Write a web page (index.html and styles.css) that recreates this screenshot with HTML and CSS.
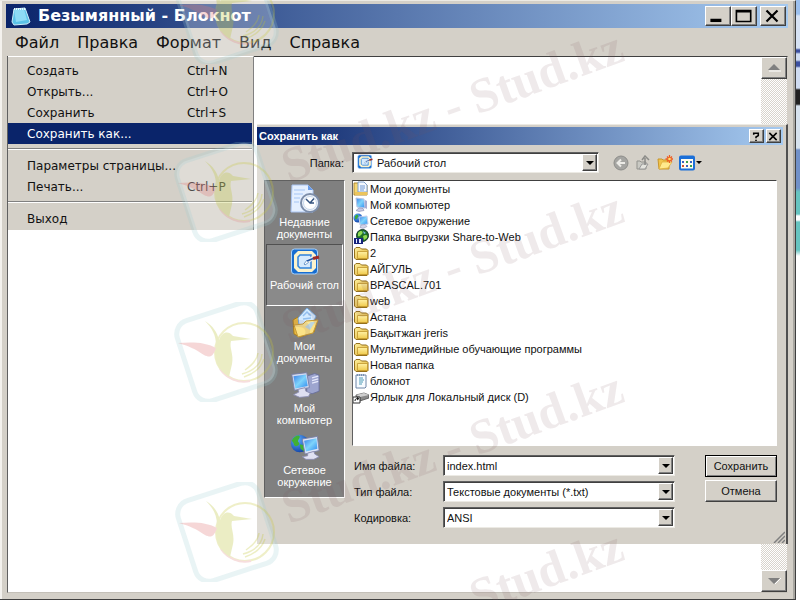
FILE: index.html
```html
<!DOCTYPE html>
<html lang="ru">
<head>
<meta charset="utf-8">
<title>Безымянный - Блокнот</title>
<link rel="stylesheet" href="styles.css">
</head>
<body>
<svg class="defs" aria-hidden="true">
  <defs>
    <linearGradient id="gFolder" x1="0" y1="0" x2="1" y2="1"><stop offset="0" stop-color="#fff2a0"/><stop offset="1" stop-color="#dba92c"/></linearGradient>
    <linearGradient id="gFront" x1="0" y1="0" x2="0" y2="1"><stop offset="0" stop-color="#fff1a4"/><stop offset="1" stop-color="#f0cb4e"/></linearGradient>
    <linearGradient id="gScreen" x1="0" y1="0" x2="1" y2="1"><stop offset="0" stop-color="#3a7fe8"/><stop offset=".5" stop-color="#7fd4fb"/><stop offset="1" stop-color="#2f8af0"/></linearGradient>
    <radialGradient id="gGlobe" cx=".35" cy=".3" r=".8"><stop offset="0" stop-color="#5fb0ff"/><stop offset="1" stop-color="#0a3aa0"/></radialGradient>
    <symbol id="folder" viewBox="0 0 16 16"><path d="M1.500 4 3 2.500h4L8.500 4h5L15 5.500v8L14 14.500H3L1.500 13z" fill="url(#gFolder)" stroke="#94701c"/><path d="M4.500 6.500h10v7h-10z" fill="url(#gFront)" stroke="#c0952c" stroke-width=".8"/></symbol>
    <symbol id="docs" viewBox="0 0 16 16"><path d="M1 2h5l1 2h7v10H1z" fill="#f5d775" stroke="#b08a30"/><path d="M5 1h6l3 3v7H5z" fill="#f3f8ff" stroke="#7fa0cc"/><path d="M7 5h5M7 7h5M7 9h4" stroke="#6d97d4"/><path d="M2 11h12v3H2z" fill="#ecc45b"/></symbol>
    <symbol id="pc" viewBox="0 0 16 16"><path d="m3 1 8 1 1 9-8-1z" fill="url(#gScreen)" stroke="#b8c4e4"/><path d="M12 3l2 1v8l-2-1z" fill="#a6abd2"/><path d="m6 11 4 .5 1 2-5 1-3-1z" fill="#c9cbe4" stroke="#8287ad" stroke-width=".6"/></symbol>
    <symbol id="net" viewBox="0 0 16 16"><circle cx="5" cy="5" r="4.500" fill="url(#gGlobe)"/><path d="M2 3c3-3 4 0 3 1S4 7 2 6zM6 5h2v3H6z" fill="#3caa3a"/><path d="m6 4 8-1 1 8-8 1z" fill="url(#gScreen)" stroke="#c4cfec"/><path d="m8 12 4-.5 2 2-4 2-3-1z" fill="#d4d4e9" stroke="#8287ad" stroke-width=".5"/></symbol>
    <symbol id="web" viewBox="0 0 16 16"><circle cx="9.500" cy="6.500" r="6" fill="#1d6f2a" stroke="#173a2b"/><path d="M5 4c3-4 6-1 4 1S6 8 5 7zM10 7c3-2 5-1 4 2l-3 2z" fill="#8fdc52"/><path d="M10 2l3 2-2 1z" fill="#7ec0ef"/><path d="M1 9h9v6H1z" fill="#16247c"/><path d="M3 10h1v4H3zM6 10h2v4H6z" fill="#e6ecff"/></symbol>
    <symbol id="note" viewBox="0 0 16 16"><path d="M3 2h10v12l-1 1H3z" fill="#f7fbff" stroke="#6f86a8"/><path d="M4 2h8" stroke="#3f5f90" stroke-dasharray="1 1"/><path d="M6 5h4M6 7h5M6 9h4M6 11h3" stroke="#4c9ab4"/></symbol>
    <symbol id="drive" viewBox="0 0 16 16"><path d="m3 6 8-2 5 2v3l-9 3-4-2z" fill="#898989" stroke="#444" stroke-width=".7"/><path d="m3 6 8-2 5 2-9 2z" fill="#cfcfcf"/><path d="M0 8h7v6H0z" fill="#fff" stroke="#333"/><path d="M2 12c0-2 1-2.500 3-2.500M4 8.500l2 1-2 1.500" fill="none" stroke="#111"/></symbol>
    <symbol id="desk" viewBox="0 0 30 30"><rect x="1.500" y="2" width="26" height="25" rx="3" fill="#176dd1" stroke="#a9d2fa"/><path d="M8 4h14l4 4v13l-4 4H8l-4-4V8z" fill="#fbf3cd"/><path d="M10 8h11v13H10l-2-2V10z" fill="#d5eafd" stroke="#2f83dc" stroke-width="1.500"/><path d="m14 17 3-4 2 2-4 3z" fill="#fff" stroke="#3b76b8" stroke-width=".7"/><path d="m18 14 5-3" stroke="#e8eef8" stroke-width="4"/><path d="m17 14 6-2.500" stroke="#2257a3" stroke-width="1.500"/><path d="m23 11.500 6-1.500" stroke="#9a2a2a" stroke-width="3"/></symbol>
    <symbol id="recent" viewBox="0 0 30 30"><path d="M2 1h16l5 5v22H1z" fill="#e4efff" stroke="#a9c4f2"/><path d="M18 1v5h5z" fill="#6a9ce8"/><path d="M4 6h11M4 10h9M4 14h6M4 18h5" stroke="#c4dafa" stroke-width="2"/><circle cx="20" cy="19" r="9" fill="#eef3fa" stroke="#7d8eaa" stroke-width="2"/><circle cx="20" cy="19" r="6.500" fill="#fff" stroke="#c6d7ec"/><path d="m16 15 4 4 4-4.500M20 19h4" stroke="#34537f" stroke-width="1.500" fill="none"/></symbol>
    <symbol id="mydocs" viewBox="0 0 30 30"><path d="M3 12 8 9l4 2 12-1 3 4-3 10-14 5-6-3z" fill="#e9b941" stroke="#a67c20"/><path d="M8 10 17 0l9 8-5 12-12-3z" fill="#d4ebff" stroke="#75a8dd"/><path d="m13 8 4-4 4 4M13 11l8-1" stroke="#92bfef" fill="none" stroke-width="1.500"/><path d="m4 17 9-1 3-3 12-1-5 13-15 4z" fill="#fce58d" stroke="#c89c37" fill-opacity=".93"/><path d="m15 19 6-5 4 0-5 8z" fill="#acd2f2" opacity=".8"/></symbol>
    <symbol id="bigpc" viewBox="0 0 34 30"><path d="m19 5 9-3 5 2v18l-8 3-6-2z" fill="#9da5cf" stroke="#686e9b"/><path d="m25 7 7-2M25 10l7-2M25 13l7-2" stroke="#e5e8fb" stroke-width="1.500"/><path d="m2 3 17-2 3 17-17 3z" fill="#d4daef" stroke="#767ea6"/><path d="m4 5 14-2 2 13-14 3z" fill="url(#gScreen)"/><path d="m9 20 8-2 1 4 5 2-2 4-10 1-7-3 6-3z" fill="#dedff0" stroke="#8c8eb4"/></symbol>
    <symbol id="bignet" viewBox="0 0 34 30"><circle cx="11" cy="11" r="10" fill="url(#gGlobe)"/><path d="M2 8c3-7 10-7 9-4S8 8 10 10s-2 5-4 4-1-3-4-6zM11 12l5 1v7l-4-3z" fill="#42b033"/><path d="m14 6 17-3 2 16-16 4z" fill="#dce3f5" stroke="#777fa8"/><path d="m16 8 14-3 1 12-13 3z" fill="url(#gScreen)"/><path d="m20 22 7-2 1 3 5 3-6 3h-9l-4-3 6-1z" fill="#e0e1f2" stroke="#8c8eb4"/></symbol>
    <symbol id="bird" viewBox="0 0 112 100">
      <rect x="14" y="8" width="84" height="84" rx="14" transform="rotate(-18 56 50)" fill="#fff" fill-opacity=".25" stroke="#9ccbd3" stroke-opacity=".22" stroke-width="5"/>
      <g opacity=".28"><circle cx="74" cy="50" r="29" fill="none" stroke="#c8c83c" stroke-width="2"/>
      <path d="M50 67a29 29 0 0 0 30 12" fill="none" stroke="#e48a8a" stroke-width="2"/>
      <path d="M35 19c8 5 12 11 14 19 3-8 9-10 14-4l18 3-20 2c-2 7 3 13 1 23l-3 13c-12-7-16-20-13-32 0-10-4-17-11-24z" fill="#b8c22f"/>
      <path d="M8 41c15-1 27-1 38 5-3 9-6 10-12 7-9-6-15-9-26-12z" fill="#df7474"/>
      <path d="M92 52c-1 11-9 17-20 20M94 57c-3 9-11 15-20 18M88 51c-1 8-7 13-13 17" fill="none" stroke="#c0c530" stroke-width="1.500"/></g>
    </symbol>
  </defs>
</svg>

<main class="window">
  <header class="title">
    <svg class="appicon" viewBox="0 0 20 20" aria-hidden="true"><path d="m3 3 11-1 5 14-3 2-13 1-2-3z" fill="#5bc3e8" stroke="#cdeffa"/><path d="m3 4 10-1 3 11-11 2z" fill="#8edcf5"/><path d="M3 3h11" stroke="#e9fbff" stroke-width="2" stroke-dasharray="1 1"/></svg>
    <h1>Безымянный - Блокнот</h1>
    <div class="winbtns">
      <button class="bevel wb" aria-label="Свернуть"><svg viewBox="0 0 20 14"><path d="M4 11h10" stroke="#000" stroke-width="3"/></svg></button>
      <button class="bevel wb" aria-label="Развернуть"><svg viewBox="0 0 20 14"><path d="M4 2h13v10H4zM4 3h13" fill="none" stroke="#000" stroke-width="1.500"/></svg></button>
      <button class="bevel wb close" aria-label="Закрыть"><svg viewBox="0 0 20 14"><path d="m5 2 10 10M15 2 5 12" stroke="#000" stroke-width="2"/></svg></button>
    </div>
  </header>
  <nav class="menubar">
    <button>Файл</button><button>Правка</button><button>Формат</button><button>Вид</button><button>Справка</button>
  </nav>
  <section class="client">
    <textarea aria-label="Текст"></textarea>
    <div class="scroll">
      <button class="bevel sb" aria-label="Вверх"><svg viewBox="0 0 24 18"><path d="m6 11 6-6 6 6z" fill="#808080"/><path d="M7 12h12" stroke="#fff"/></svg></button>
      <button class="bevel sb" aria-label="Вниз"><svg viewBox="0 0 24 18"><path d="m6 6 6 6 6-6z" fill="#808080"/><path d="m13 12 6-6" stroke="#fff"/></svg></button>
    </div>
    <div class="menu">
      <button><span>Создать</span><span>Ctrl+N</span></button>
      <button><span>Открыть...</span><span>Ctrl+O</span></button>
      <button><span>Сохранить</span><span>Ctrl+S</span></button>
      <button class="active"><span>Сохранить как...</span></button>
      <hr>
      <button><span>Параметры страницы...</span></button>
      <button><span>Печать...</span><span>Ctrl+P</span></button>
      <hr>
      <button><span>Выход</span></button>
    </div>
    <section class="dialog" role="dialog" aria-labelledby="dt">
      <header class="dtitle">
        <h2 id="dt">Сохранить как</h2>
        <button class="bevel db" aria-label="Справка"><svg viewBox="0 0 12 12"><path d="M3.500 4V2.500h5V5L6 6.500V8M6 9.500V11" fill="none" stroke="#000" stroke-width="1.700"/></svg></button>
        <button class="bevel db" aria-label="Закрыть"><svg viewBox="0 0 12 12"><path d="m2 2 8 8M10 2l-8 8" stroke="#000" stroke-width="1.700"/></svg></button>
      </header>
      <div class="toolbar">
        <label for="dir">Папка:</label>
        <div class="combo dir">
          <svg class="diricon" aria-hidden="true"><use href="#desk"/></svg>
          <select id="dir"><option>Рабочий стол</option></select>
          <span class="bevel arrow"></span>
        </div>
        <div class="tools">
          <button aria-label="Назад"><svg viewBox="0 0 16 16"><circle cx="8" cy="8" r="7" fill="#a5a5a2" stroke="#8d8d8a"/><path d="M12 8H5m3-3.500L4.500 8 8 11.500" fill="none" stroke="#ecebe7" stroke-width="2"/></svg></button>
          <button aria-label="Вверх"><svg viewBox="0 0 16 16"><path d="M2 6h3l1 1h5v7H2z" fill="#c9c9c3" stroke="#93938e"/><path d="m4 14 3-5h6l-3 5z" fill="#e3e3dd" stroke="#999"/><path d="M10 10V3M7 5l3-4 4 4" fill="none" stroke="#8b8b88" stroke-width="1.500"/></svg></button>
          <button aria-label="Новая папка"><svg viewBox="0 0 16 16"><path d="M1 4h4l1 1h6v9H2z" fill="#f0c44c" stroke="#c9962c"/><path d="m2 14 3-7h10l-4 6z" fill="#ffe98c" stroke="#dbab3a" stroke-width=".7"/><path d="M12.500 0v8M8.500 4h8M10 1.500l5 5M15 1.500l-5 5" stroke="#ee5a20" stroke-width="1.300"/><circle cx="12.500" cy="4" r="1.300" fill="#ffe26b"/></svg></button>
          <button class="view" aria-label="Вид"><svg viewBox="0 0 16 16"><rect x="1" y="1.500" width="14" height="13" rx="1" fill="#fffdf0" stroke="#1b6fd8" stroke-width="2"/><path d="M1 2.500h14" stroke="#1b6fd8" stroke-width="3"/><path d="M3 7h2M11 7h2M7 11h2" stroke="#3a62c0" stroke-width="2"/><path d="M7 7h2M11 11h2" stroke="#3aa04a" stroke-width="2"/><path d="M3 11h2" stroke="#d2522c" stroke-width="2"/></svg><i class="tri"></i></button>
        </div>
      </div>
      <div class="body">
        <nav class="places">
          <button><svg><use href="#recent"/></svg>Недавние документы</button>
          <button class="sel"><svg><use href="#desk"/></svg>Рабочий стол</button>
          <button><svg><use href="#mydocs"/></svg><span>Мои<br>документы</span></button>
          <button><svg><use href="#bigpc"/></svg>Мой компьютер</button>
          <button><svg><use href="#bignet"/></svg>Сетевое окружение</button>
        </nav>
        <div class="main">
          <ul class="files">
            <li><svg><use href="#docs"/></svg>Мои документы</li>
            <li><svg><use href="#pc"/></svg>Мой компьютер</li>
            <li><svg><use href="#net"/></svg>Сетевое окружение</li>
            <li><svg><use href="#web"/></svg>Папка выгрузки Share-to-Web</li>
            <li><svg><use href="#folder"/></svg>2</li>
            <li><svg><use href="#folder"/></svg>АЙГУЛЬ</li>
            <li><svg><use href="#folder"/></svg>BPASCAL.701</li>
            <li><svg><use href="#folder"/></svg>web</li>
            <li><svg><use href="#folder"/></svg>Астана</li>
            <li><svg><use href="#folder"/></svg>Бақытжан jreris</li>
            <li><svg><use href="#folder"/></svg>Мультимедийные обучающие программы</li>
            <li><svg><use href="#folder"/></svg>Новая папка</li>
            <li><svg><use href="#note"/></svg>блокнот</li>
            <li><svg><use href="#drive"/></svg>Ярлык для Локальный диск (D)</li>
          </ul>
          <div class="form">
            <div class="fields">
              <label for="fn">Имя файла:</label>
              <div class="combo"><input id="fn" type="text" value="index.html"><span class="bevel arrow"></span></div>
              <label for="ft">Тип файла:</label>
              <div class="combo"><select id="ft"><option>Текстовые документы (*.txt)</option></select><span class="bevel arrow"></span></div>
              <label for="enc">Кодировка:</label>
              <div class="combo"><select id="enc"><option>ANSI</option></select><span class="bevel arrow"></span></div>
            </div>
            <div class="actions">
              <button class="bevel default">Сохранить</button>
              <button class="bevel">Отмена</button>
            </div>
          </div>
        </div>
      </div>
      <svg class="grip" viewBox="0 0 12 12" aria-hidden="true"><path d="M1 12 12 1M5 12l7-7M9 12l3-3" stroke="#808080" stroke-width="1.500"/></svg>
    </section>
  </section>
</main>
<aside class="desktop" aria-hidden="true"></aside>

<svg class="mark" aria-hidden="true">
  <use href="#bird" x="171" y="-36" width="112" height="100"/>
  <use href="#bird" x="170" y="142" width="112" height="100"/>
  <use href="#bird" x="170" y="302" width="112" height="100"/>
  <use href="#bird" x="171" y="482" width="112" height="100"/>
  <text transform="translate(289 183) rotate(-20)">Stud.kz - Stud.kz</text>
  <text transform="translate(289 344) rotate(-20)">Stud.kz - Stud.kz</text>
  <text transform="translate(289 524) rotate(-20)">Stud.kz - Stud.kz</text>
  <text transform="translate(289 682) rotate(-20)">Stud.kz - Stud.kz</text>
</svg>
</body>
</html>
```
FILE: styles.css
```css
* { box-sizing: border-box; }
body {
  margin: 0;
  height: 100vh;
  display: flex;
  overflow: hidden;
  position: relative;
  background: #d4d0c8;
  color: #111;
  font-family: "DejaVu Sans", sans-serif;
  font-size: 12px;
}
button, input, select, textarea {
  font: inherit;
  color: inherit;
  margin: 0;
  padding: 0;
  border: 0;
  background: none;
  appearance: none;
  border-radius: 0;
  outline: 0;
}
h1, h2, ul { margin: 0; padding: 0; }
.defs { position: absolute; width: 0; height: 0; }
.bevel {
  background: #d4d0c8;
  border: 1px solid;
  border-color: #fff #404040 #404040 #fff;
  box-shadow: inset -1px -1px #808080;
}

.window {
  flex: 1;
  display: flex;
  flex-direction: column;
  padding: 3px 7px 6px 6px;
  background: #d4d0c8;
  border-top: 1px solid #eceae4;
  border-right: 1px solid #404040;
  border-bottom: 1px solid #404040;
  box-shadow: inset -2px 0 #a8a6a0, inset 2px 0 #f4f2ee;
}
.desktop {
  width: 4px;
  background: linear-gradient(#9cc0ee 0 14px, #d6e2f4 16px 48px, #3c50a0 50px 52px, #cfdcf2 54px 60px, #3c50a0 62px 66px, #cfdcf2 68px 88px, #222 90px 104px, #d6e2ee 106px 148px, #7090c8 150px 188px, #66c4c0 192px 214px, #fff 216px 220px, #66c4c0 222px 250px, #fff 256px);
}

.title {
  display: flex;
  align-items: center;
  height: 24px;
  padding: 0 2px 0 4px;
  background: linear-gradient(90deg, #0a246a, #a6caf0);
  color: #fff;
}
.appicon { width: 22px; height: 20px; margin-right: 6px; }
.title h1 { flex: 1; font-size: 16px; line-height: 24px; }
.winbtns { display: flex; }
.wb { width: 26px; height: 20px; }
.wb svg { display: block; width: 22px; height: 16px; }
.close { margin-left: 3px; }

.menubar { display: flex; gap: 18px; height: 28px; padding: 0 9px; font-size: 16px; }

.client {
  flex: 1;
  display: flex;
  position: relative;
  min-height: 0;
  margin-left: 1px;
  background: #fff;
  border: 1px solid;
  border-color: #404040 #d4d0c8 #c4c0b8 #606060;
}
.client textarea { flex: 1; resize: none; }
.scroll {
  display: flex;
  flex-direction: column;
  justify-content: space-between;
  width: 26px;
  background: repeating-conic-gradient(#d8d4cc 0 25%, #fff 0 50%) 0 0 / 2px 2px;
}
.sb { height: 22px; }
.sb svg { display: block; width: 24px; height: 18px; }

.menu {
  position: absolute;
  top: -1px;
  left: 0;
  width: 246px;
  padding: 3px 1px 1px 0;
  background: #d4d0c8;
  border-top: 1px solid #fff;
  border-right: 1px solid #808080;
}
.menu button {
  display: grid;
  grid-template-columns: 1fr 46px;
  width: 100%;
  height: 21px;
  padding: 0 19px;
  align-items: center;
  text-align: left;
  white-space: nowrap;
}
.menu .active { background: #0a246a; color: #fff; }
.menu hr { height: 2px; margin: 4px 0 5px; border: 0; border-top: 1px solid #808080; background: #fff; }

.dialog {
  position: absolute;
  top: 67px;
  left: 249px;
  right: -1px;
  background: #d4d0c8;
  border-top: 1px solid #eceae4;
  border-right: 2px solid #505050;
  padding: 2px 3px 16px 0;
  font-family: "Liberation Sans", sans-serif;
  font-size: 11px;
}
.dtitle { display: flex; align-items: center; height: 18px; padding: 0 2px; gap: 2px; background: linear-gradient(90deg, #0a246a, #a6caf0); color: #fff; }
.dtitle h2 { flex: 1; font-size: 11px; line-height: 17px; }
.db { width: 15px; height: 14px; }
.db svg { display: block; width: 12px; height: 11px; }

.toolbar { display: flex; align-items: center; height: 35px; }
.toolbar label { width: 87px; margin-right: 8px; text-align: right; }
.combo {
  display: flex;
  align-items: stretch;
  position: relative;
  height: 21px;
  padding: 1px;
  background: #fff;
  border: 1px solid;
  border-color: #606060 #eceae4 #eceae4 #606060;
  box-shadow: inset 1px 1px #404040;
}
.combo select, .combo input { flex: 1; min-width: 0; padding: 0 18px 0 2px; }
.dir { width: 247px; }
.dir select { padding-left: 4px; }
.diricon { width: 16px; height: 16px; margin-left: 3px; }
.arrow { position: absolute; top: 1px; right: 1px; bottom: 1px; width: 15px; display: grid; place-items: center; pointer-events: none; }
.arrow::before, .tri { content: ""; border: 4px solid transparent; border-top-color: #000; border-bottom-width: 0; }
.tri { border-width: 3px 3px 0; }
.tools { display: flex; gap: 6px; margin-left: 14px; }
.tools svg { display: block; width: 16px; height: 16px; }
.view { display: flex; align-items: center; gap: 1px; }

.body { display: flex; gap: 7px; padding: 0 6px 0 7px; align-items: flex-start; }
.places {
  width: 81px;
  padding: 1px 1px 5px;
  background: #808080;
  color: #fff;
  border: 1px solid;
  border-color: #606060 #fff #fff #606060;
}
.places button { display: flex; flex-direction: column; align-items: center; width: 100%; height: 62px; padding-top: 2px; line-height: 12px; }
.places svg { width: 30px; height: 30px; margin-bottom: 2px; flex: none; }
.places .sel { border: 1px solid; border-color: #505050 #fff #fff #505050; background: #8a8a8a; }

.main { flex: 1; min-width: 0; }
.files {
  height: 266px;
  list-style: none;
  background: #fff;
  border: 1px solid;
  border-color: #404040 #fff #fff #606060;
}
.files li { display: flex; align-items: center; gap: 1px; height: 16px; white-space: nowrap; }
.files svg { width: 16px; height: 16px; }

.form { display: flex; justify-content: space-between; padding-top: 9px; }
.fields { display: grid; grid-template-columns: 88px 232px; gap: 5px 1px; padding-left: 2px; align-items: center; }
.actions { display: flex; flex-direction: column; gap: 3px; width: 72px; }
.actions button { height: 22px; }
.actions .default { border-color: #000; box-shadow: inset 1px 1px #fff, inset -1px -1px #808080; }
.grip { position: absolute; right: 1px; bottom: 1px; width: 12px; height: 12px; }

.mark { position: absolute; inset: 0; width: 100%; height: 100%; pointer-events: none; overflow: hidden; }
.mark text { font: bold 49px "Liberation Serif", serif; fill: #78505a; fill-opacity: .12; }
```
